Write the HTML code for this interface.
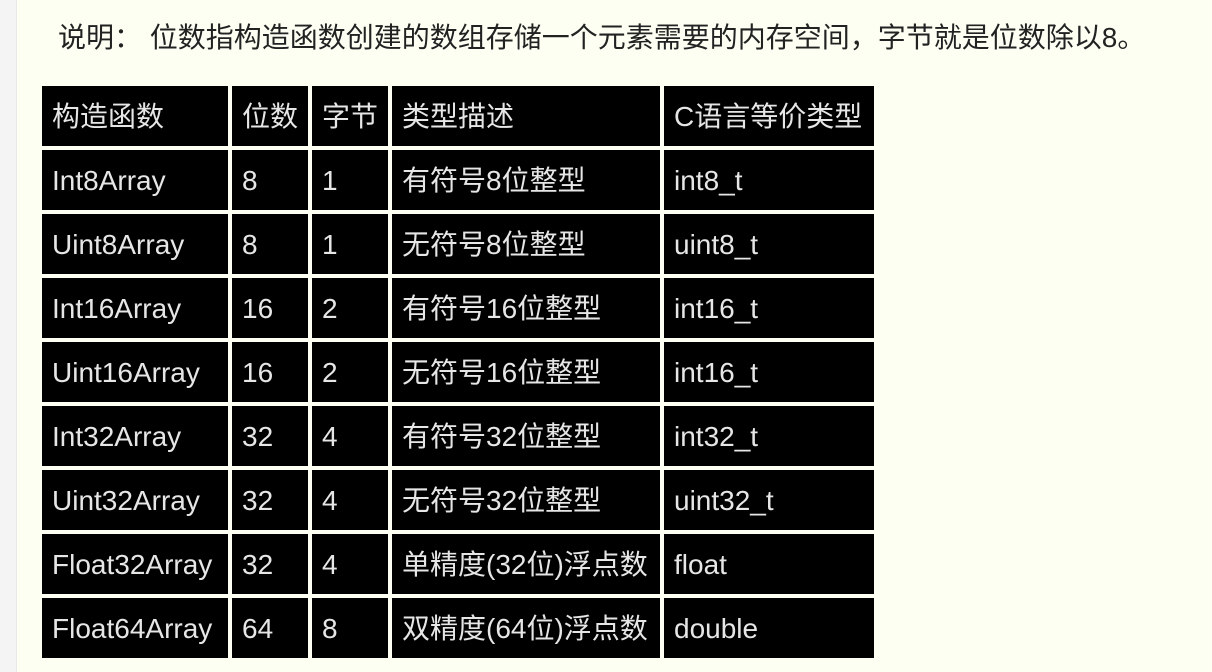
<!DOCTYPE html>
<html><head><meta charset="utf-8"><style>
body{margin:0;width:1212px;height:672px;background:#fdfff3;position:relative;overflow:hidden;font-family:"Liberation Sans","Noto Sans CJK SC",sans-serif}
.side{position:absolute;left:0;top:0;width:16px;height:672px;background:#f4f4f4;border-right:1px solid #e8e8e8}
.t{position:absolute;left:58px;top:20px;font-size:28px;line-height:36px;color:#222;white-space:pre}
.c{position:absolute;background:#000;color:#e6e6e6;font-size:28px;height:60px;line-height:62px;padding-left:10px;box-sizing:border-box;white-space:nowrap;overflow:hidden}
</style></head><body>
<div class="side"></div>
<div class="t">说明： 位数指构造函数创建的数组存储一个元素需要的内存空间，字节就是位数除以8。</div>
<div id="tb"></div>
<script>
var rows=[["构造函数","位数","字节","类型描述","C语言等价类型"],
["Int8Array","8","1","有符号8位整型","int8_t"],
["Uint8Array","8","1","无符号8位整型","uint8_t"],
["Int16Array","16","2","有符号16位整型","int16_t"],
["Uint16Array","16","2","无符号16位整型","int16_t"],
["Int32Array","32","4","有符号32位整型","int32_t"],
["Uint32Array","32","4","无符号32位整型","uint32_t"],
["Float32Array","32","4","单精度(32位)浮点数","float"],
["Float64Array","64","8","双精度(64位)浮点数","double"]];
var xs=[[42,186],[232,76],[312,76],[392,268],[664,210]];
var h="";
rows.forEach(function(r,i){r.forEach(function(t,j){
h+='<div class="c" style="left:'+xs[j][0]+'px;top:'+(86+i*64)+'px;width:'+xs[j][1]+'px">'+t+'</div>';});});
document.getElementById("tb").innerHTML=h;
</script>
</body></html>
